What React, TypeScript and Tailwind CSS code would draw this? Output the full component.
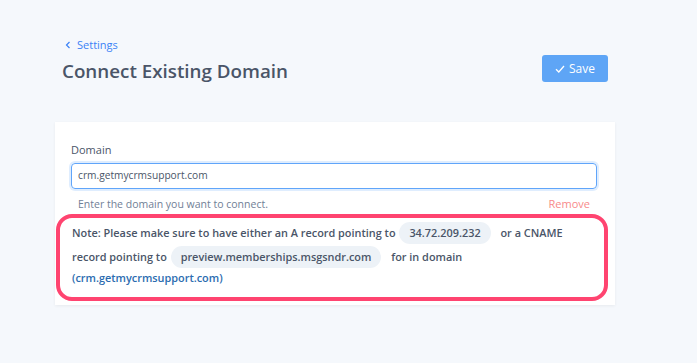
import React from 'react';

const Chip: React.FC<{ children: React.ReactNode }> = ({ children }) => (
  <span className="my-[1px] ml-[1px] mr-[7px] inline-block rounded-full bg-[#edf2f7] px-[10px] leading-[22px]">{children}</span>
);

const App: React.FC = () => {
  return (
    <div className="min-h-screen w-full bg-[#f5f8fc] font-['Open_Sans',sans-serif] text-[#4a5568]">
      <div className="ml-[55px] w-[560px] pt-[37px]">
        {/* header */}
        <div className="flex items-start justify-between pl-[7px] pr-[7px]">
          <div>
            <a className="flex items-center gap-[5px] pl-[2px] text-[11px] leading-[16px] text-[#3b82f6]">
              <svg width="8" height="8" viewBox="0 0 8 8" fill="none" stroke="currentColor" strokeWidth="1.2">
                <path d="M5.5 1 L2.5 4 L5.5 7" />
              </svg>
              Settings
            </a>
            <h1 className="mt-[4px] text-[18.8px] leading-[28px] font-semibold text-[#4a5568]">Connect Existing Domain</h1>
          </div>
          <button
            type="button"
            className="mt-[18px] flex h-[27px] w-[66px] items-center justify-center gap-[4px] rounded-[3px] bg-[#5ea5f6] text-[12px] text-white"
          >
            <svg width="10" height="8" viewBox="0 0 10 8" fill="none" stroke="currentColor" strokeWidth="1.3">
              <path d="M1 4.2 L3.8 7 L9 1" />
            </svg>
            Save
          </button>
        </div>

        {/* card */}
        <div className="mt-[37px] bg-white pt-[20px] pl-[16px] pr-[18px] pb-[4px] shadow-[0_1px_3px_rgba(0,0,0,0.06)]">
          <label className="block text-[11px] leading-[16px] text-[#4a5568]">Domain</label>
          <div className="mt-[5px] flex h-[26px] items-center rounded-[4px] border border-[#60a5fa] px-[6px] text-[10.2px] text-[#4a5568] shadow-[0_0_0_2px_rgba(96,165,250,0.2)]">
            crm.getmycrmsupport.com
          </div>
          <div className="mt-[8px] flex items-center justify-between pl-[7px] pr-[7px] text-[10.5px] leading-[14px]">
            <span className="text-[#718096]">Enter the domain you want to connect.</span>
            <span className="text-[11px] text-[#f88a8a]">Remove</span>
          </div>
          <div className="ml-[-15px] mr-[-11px] mt-[3px] rounded-[16px] border-[4px] border-[#ff4470] pl-[12px] pr-[8px] pt-[3px] pb-[10px] text-[10.9px] font-semibold leading-[18px] text-[#4a5568]">
            Note: Please make sure to have either an A record pointing to <Chip>34.72.209.232</Chip>{' '}
            or a CNAME record pointing to <Chip>preview.memberships.msgsndr.com</Chip> for in domain{' '}
            <span className="text-[#2b6cb0]">(crm.getmycrmsupport.com)</span>
          </div>
        </div>
      </div>
    </div>
  );
};

export default App;
